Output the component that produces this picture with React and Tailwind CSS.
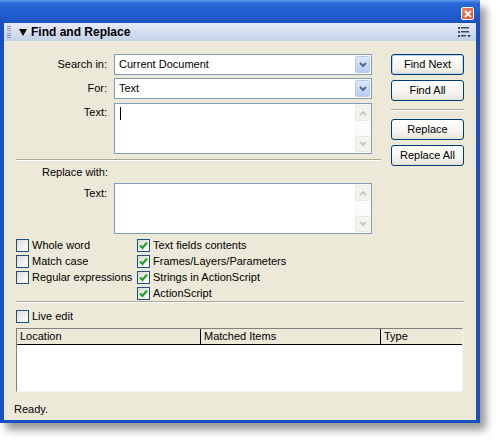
import React from "react";

const font = { fontFamily: '"Liberation Sans", Arial, sans-serif' };

function Chevron({ up = false, color = "#4d6185" }) {
  return (
    <svg width="8" height="6" viewBox="0 0 8 6">
      <path
        d={up ? "M1 5 L4 2 L7 5" : "M1 1 L4 4 L7 1"}
        fill="none"
        stroke={color}
        strokeWidth="1.8"
      />
    </svg>
  );
}

function Select({ value }) {
  return (
    <div className="flex h-[21px] w-[258px] items-center border border-[#7f9db9] bg-white p-[1px]">
      <span className="flex-1 pl-[3px] text-[11px] leading-none text-black">{value}</span>
      <div className="flex h-[17px] w-[15px] items-center justify-center rounded-[2px] border border-[#b9c9ef] bg-[linear-gradient(to_bottom,#dfe9fd,#b6cbf7)]">
        <Chevron />
      </div>
    </div>
  );
}

function TextBox({ caret = false }) {
  return (
    <div className="flex h-[51px] w-[258px] border border-[#7f9db9] bg-white">
      <div className="flex-1 pl-[5px] pt-[3px]">
        {caret && <div className="h-[13px] w-[1px] bg-black" />}
      </div>
      <div className="flex w-[17px] flex-col justify-between bg-[#fbfbf9] p-[1px]">
        <div className="flex h-[16px] items-center justify-center rounded-[2px] border border-[#e8e8e4] bg-[#f3f3ef]">
          <Chevron up color="#c9c7ba" />
        </div>
        <div className="flex h-[16px] items-center justify-center rounded-[2px] border border-[#e8e8e4] bg-[#f3f3ef]">
          <Chevron color="#c9c7ba" />
        </div>
      </div>
    </div>
  );
}

function Button({ children, primary = false }) {
  return (
    <div
      className={
        "flex h-[21px] w-[73px] items-center justify-center rounded-[3px] border border-[#003c74] bg-[linear-gradient(to_bottom,#ffffff,#f3f2ec_70%,#e3e0d3)] text-[11px] leading-none text-black " +
        (primary ? "shadow-[inset_0_0_0_1px_#bcd4f6]" : "")
      }
    >
      {children}
    </div>
  );
}

function Check({ checked, label }) {
  return (
    <div className="flex h-[16px] items-center gap-[3px]">
      <div className="flex h-[13px] w-[13px] items-center justify-center border border-[#1c5180] bg-[linear-gradient(135deg,#dcdbd5,#ffffff)]">
        {checked && (
          <svg width="9" height="9" viewBox="0 0 9 9">
            <path d="M1 4.5 L3.5 7 L8 1.5" fill="none" stroke="#21a121" strokeWidth="2" />
          </svg>
        )}
      </div>
      <span className="text-[11px] leading-none text-black">{label}</span>
    </div>
  );
}

function Separator({ className = "" }) {
  return <div className={"h-[2px] border-t border-b border-t-[#aca899] border-b-white " + className} />;
}

export default function App() {
  return (
    <div className="h-[441px] w-[498px] bg-white" style={font}>
      <div className="flex h-[423px] w-[480px] flex-col bg-[#1a4fc0] shadow-[6px_7px_8px_rgba(0,0,0,0.4)]">
        {/* title bar */}
        <div className="flex h-[23px] items-start justify-end bg-[linear-gradient(to_bottom,#5b9cf0_0%,#2a68d8_14%,#1f5acb_70%,#1c52bd_100%)] pr-[6px] pt-[7px]">
          <div className="flex h-[13px] w-[13px] items-center justify-center rounded-[2px] border border-white bg-[linear-gradient(135deg,#f08a6a,#dc4a25)]">
            <svg width="8" height="8" viewBox="0 0 8 8">
              <path d="M1 1 L7 7 M7 1 L1 7" stroke="white" strokeWidth="1.8" />
            </svg>
          </div>
        </div>

        <div className="mx-[4px] mb-[3px] flex flex-1 flex-col bg-[#ece9d8]">
          {/* panel header */}
          <div className="flex h-[18px] items-center bg-[linear-gradient(to_bottom,#e6ecf6,#c3d1e7)] pl-[3px] pr-[5px]">
            <div className="flex h-[12px] w-[4px] flex-col justify-between">
              {[0, 1, 2, 3, 4, 5].map((i) => (
                <div key={i} className="h-[1px] w-[4px] bg-[#8a93a3]" />
              ))}
            </div>
            <svg className="ml-[8px]" width="8" height="7" viewBox="0 0 8 7">
              <path d="M0 0 L8 0 L4 7 Z" fill="#000" />
            </svg>
            <span className="ml-[4px] flex-1 text-[12px] font-bold leading-none text-black">Find and Replace</span>
            <svg width="13" height="11" viewBox="0 0 13 11">
              <rect x="0" y="0" width="2" height="2" fill="#3b4a66" />
              <rect x="3" y="0" width="8" height="1.5" fill="#3b4a66" />
              <rect x="0" y="4" width="2" height="2" fill="#3b4a66" />
              <rect x="3" y="4" width="8" height="1.5" fill="#3b4a66" />
              <rect x="0" y="8" width="2" height="2" fill="#3b4a66" />
              <rect x="3" y="8" width="5" height="1.5" fill="#3b4a66" />
              <path d="M9 8 L13 8 L11 10.5 Z" fill="#3b4a66" />
            </svg>
          </div>

          {/* top section */}
          <div className="flex pt-[13px]">
            <div className="flex w-[377px] flex-col">
              <div className="flex items-center gap-[7px]">
                <span className="w-[103px] text-right text-[11px] leading-none text-black">Search in:</span>
                <Select value="Current Document" />
              </div>
              <div className="mt-[3px] flex items-center gap-[7px]">
                <span className="w-[103px] text-right text-[11px] leading-none text-black">For:</span>
                <Select value="Text" />
              </div>
              <div className="mt-[4px] flex items-start gap-[7px]">
                <span className="w-[103px] pt-[4px] text-right text-[11px] leading-none text-black">Text:</span>
                <TextBox caret />
              </div>
              <Separator className="ml-[12px] mt-[5px]" />
              <div className="ml-[38px] mt-[6px] text-[11px] leading-none text-black">Replace with:</div>
              <div className="mt-[5px] flex items-start gap-[7px]">
                <span className="w-[103px] pt-[5px] text-right text-[11px] leading-none text-black">Text:</span>
                <TextBox />
              </div>
            </div>
            <div className="ml-[10px] flex flex-col">
              <Button primary>Find Next</Button>
              <div className="mt-[5px]">
                <Button>Find All</Button>
              </div>
              <Separator className="my-[8px]" />
              <Button>Replace</Button>
              <div className="mt-[5px]">
                <Button>Replace All</Button>
              </div>
            </div>
          </div>

          {/* checkboxes */}
          <div className="ml-[12px] mt-[3px] flex">
            <div className="flex w-[121px] flex-col">
              <Check label="Whole word" />
              <Check label="Match case" />
              <Check label="Regular expressions" />
            </div>
            <div className="flex flex-col">
              <Check checked label="Text fields contents" />
              <Check checked label="Frames/Layers/Parameters" />
              <Check checked label="Strings in ActionScript" />
              <Check checked label="ActionScript" />
            </div>
          </div>

          <Separator className="ml-[12px] mr-[12px] mt-[0px]" />

          <div className="ml-[12px] mt-[5px]">
            <Check label="Live edit" />
          </div>

          {/* results table */}
          <div className="ml-[12px] mr-[13px] mt-[4px] flex h-[64px] flex-col border border-[#7f7f7f] border-b-[#f5f4ef] border-r-[#f5f4ef] bg-white">
            <div className="flex h-[16px] border-b border-black bg-[#ece9d8] text-[11px] text-black">
              <div className="w-[184px] border-r border-black pl-[3px] leading-[15px]">Location</div>
              <div className="w-[180px] border-r border-black pl-[3px] leading-[15px]">Matched Items</div>
              <div className="flex-1 pl-[3px] leading-[15px]">Type</div>
            </div>
          </div>

          <div className="ml-[10px] mt-[12px] text-[11px] leading-none text-black">Ready.</div>
        </div>
      </div>
    </div>
  );
}
